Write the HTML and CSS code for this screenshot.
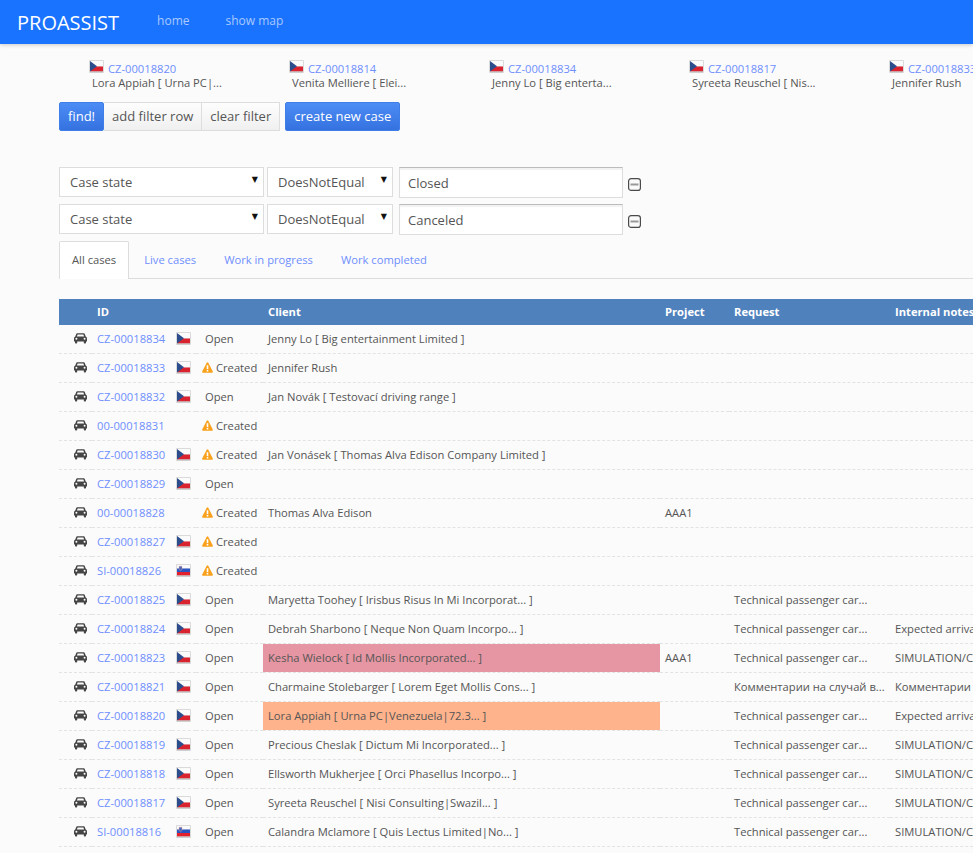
FILE: index.html
```html
<!DOCTYPE html>
<html lang="en">
<head>
    <meta charset="UTF-8">
    <meta name="viewport" content="width=device-width, initial-scale=1.0">
    <title>ProAssist</title>
    <link rel="stylesheet" href="styles.css">
</head>
<body>
    <svg class="defs" width="0" height="0">
        <symbol id="cz" viewBox="0 0 15 13">
            <rect width="15" height="13" rx="1" fill="#dadada"/>
            <rect x="1" y="1" width="13" height="5.500" fill="#fbfbfb"/>
            <rect x="1" y="6.500" width="13" height="5" fill="#d9232e"/>
            <path d="M1 1 L8 6.250 L1 11.500 Z" fill="#2b4d8c"/>
            <rect y="11.500" x="1" width="13" height="1" fill="#c4c4c4"/>
        </symbol>
        <symbol id="si" viewBox="0 0 15 13">
            <rect width="15" height="13" rx="1" fill="#dadada"/>
            <rect x="1" y="1" width="13" height="3.500" fill="#fbfbfb"/>
            <rect x="1" y="4.500" width="13" height="3.500" fill="#2a55c0"/>
            <rect x="1" y="8" width="13" height="3.500" fill="#e4202c"/>
            <path d="M3 2.200 h3 v2.800 q0 1.200 -1.500 1.800 q-1.500 -0.600 -1.500 -1.800 Z" fill="#4a68b8" stroke="#f0a0a0" stroke-width="0.400"/>
            <rect y="11.500" x="1" width="13" height="1" fill="#c4c4c4"/>
        </symbol>
        <symbol id="car" viewBox="0 0 13 11">
            <path fill-rule="evenodd" d="M3.200 0.300 H9.800 Q10.500 0.300 10.800 1 L11.700 3.600 Q13 4.100 13 5.400 V8.400 H12 V9.800 Q12 10.500 11.300 10.500 H10.500 Q9.800 10.500 9.800 9.800 V8.400 H3.200 V9.800 Q3.200 10.500 2.500 10.500 H1.700 Q1 10.500 1 9.800 V8.400 H0 V5.400 Q0 4.100 1.300 3.600 L2.200 1 Q2.500 0.300 3.200 0.300 Z M3.600 1.500 L2.900 3.500 H10.100 L9.400 1.500 Z M2.400 4.700 A1 1 0 1 0 2.401 6.700 A1 1 0 1 0 2.400 4.700 Z M10.600 4.700 A1 1 0 1 0 10.601 6.700 A1 1 0 1 0 10.600 4.700 Z" fill="#454545"/>
        </symbol>
        <symbol id="warn" viewBox="0 0 11 11">
            <path d="M5.500 0.200 Q6 0.200 6.300 0.800 L10.800 9.400 Q11.200 10.600 10 10.700 H1 Q-0.200 10.600 0.200 9.400 L4.700 0.800 Q5 0.200 5.500 0.200 Z" fill="#f9a11b"/>
            <rect x="4.700" y="3.200" width="1.600" height="4" fill="#fff"/>
            <rect x="4.700" y="8" width="1.600" height="1.500" fill="#fff"/>
        </symbol>
        <symbol id="minus" viewBox="0 0 13 13">
            <rect x="0.600" y="0.600" width="11.800" height="11.800" rx="2.500" fill="#fafafa" stroke="#4a4a4a" stroke-width="1.200"/>
            <rect x="2.500" y="5.500" width="8" height="2" fill="#999"/>
        </symbol>
    </svg>

    <nav class="topbar">
        <a class="brand" href="#">PROASSIST</a>
        <a class="nav-link" href="#">home</a>
        <a class="nav-link" href="#">show map</a>
    </nav>

    <div class="recent">
        <div class="recent-item">
            <div class="recent-id"><svg class="flag"><use href="#cz"/></svg><a href="#">CZ-00018820</a></div>
            <div class="recent-name">Lora Appiah [ Urna PC|...</div>
        </div>
        <div class="recent-item">
            <div class="recent-id"><svg class="flag"><use href="#cz"/></svg><a href="#">CZ-00018814</a></div>
            <div class="recent-name">Venita Melliere [ Elei...</div>
        </div>
        <div class="recent-item">
            <div class="recent-id"><svg class="flag"><use href="#cz"/></svg><a href="#">CZ-00018834</a></div>
            <div class="recent-name">Jenny Lo [ Big enterta...</div>
        </div>
        <div class="recent-item">
            <div class="recent-id"><svg class="flag"><use href="#cz"/></svg><a href="#">CZ-00018817</a></div>
            <div class="recent-name">Syreeta Reuschel [ Nis...</div>
        </div>
        <div class="recent-item">
            <div class="recent-id"><svg class="flag"><use href="#cz"/></svg><a href="#">CZ-00018833</a></div>
            <div class="recent-name">Jennifer Rush</div>
        </div>
    </div>

    <div class="toolbar">
        <div class="btn-group">
            <button class="btn btn-blue">find!</button>
            <button class="btn">add filter row</button>
            <button class="btn">clear filter</button>
        </div>
        <button class="btn btn-blue">create new case</button>
    </div>

    <div class="filters">
        <div class="filter-row">
            <div class="select-wrap field-wide"><select><option>Case state</option></select></div>
            <div class="select-wrap field-op"><select><option>DoesNotEqual</option></select></div>
            <input class="filter-value" type="text" value="Closed">
            <svg class="minus"><use href="#minus"/></svg>
        </div>
        <div class="filter-row">
            <div class="select-wrap field-wide"><select><option>Case state</option></select></div>
            <div class="select-wrap field-op"><select><option>DoesNotEqual</option></select></div>
            <input class="filter-value" type="text" value="Canceled">
            <svg class="minus"><use href="#minus"/></svg>
        </div>
    </div>

    <ul class="tabs">
        <li class="tab active"><a href="#">All cases</a></li>
        <li class="tab"><a href="#">Live cases</a></li>
        <li class="tab"><a href="#">Work in progress</a></li>
        <li class="tab"><a href="#">Work completed</a></li>
    </ul>

    <table class="cases">
        <colgroup>
            <col class="c-car"><col class="c-id"><col class="c-flag"><col class="c-state">
            <col class="c-client"><col class="c-project"><col class="c-request"><col class="c-notes">
        </colgroup>
        <thead>
            <tr><th></th><th>ID</th><th></th><th></th><th>Client</th><th>Project</th><th>Request</th><th>Internal notes</th></tr>
        </thead>
        <tbody>
            <tr><td><svg class="car"><use href="#car"/></svg></td><td><a href="#">CZ-00018834</a></td><td><svg class="flag"><use href="#cz"/></svg></td><td><span class="open">Open</span></td><td>Jenny Lo [ Big entertainment Limited ]</td><td></td><td></td><td></td></tr>
            <tr><td><svg class="car"><use href="#car"/></svg></td><td><a href="#">CZ-00018833</a></td><td><svg class="flag"><use href="#cz"/></svg></td><td><svg class="warn"><use href="#warn"/></svg>Created</td><td>Jennifer Rush</td><td></td><td></td><td></td></tr>
            <tr><td><svg class="car"><use href="#car"/></svg></td><td><a href="#">CZ-00018832</a></td><td><svg class="flag"><use href="#cz"/></svg></td><td><span class="open">Open</span></td><td>Jan Novák [ Testovací driving range ]</td><td></td><td></td><td></td></tr>
            <tr><td><svg class="car"><use href="#car"/></svg></td><td><a href="#">00-00018831</a></td><td></td><td><svg class="warn"><use href="#warn"/></svg>Created</td><td></td><td></td><td></td><td></td></tr>
            <tr><td><svg class="car"><use href="#car"/></svg></td><td><a href="#">CZ-00018830</a></td><td><svg class="flag"><use href="#cz"/></svg></td><td><svg class="warn"><use href="#warn"/></svg>Created</td><td>Jan Vonásek [ Thomas Alva Edison Company Limited ]</td><td></td><td></td><td></td></tr>
            <tr><td><svg class="car"><use href="#car"/></svg></td><td><a href="#">CZ-00018829</a></td><td><svg class="flag"><use href="#cz"/></svg></td><td><span class="open">Open</span></td><td></td><td></td><td></td><td></td></tr>
            <tr><td><svg class="car"><use href="#car"/></svg></td><td><a href="#">00-00018828</a></td><td></td><td><svg class="warn"><use href="#warn"/></svg>Created</td><td>Thomas Alva Edison</td><td>AAA1</td><td></td><td></td></tr>
            <tr><td><svg class="car"><use href="#car"/></svg></td><td><a href="#">CZ-00018827</a></td><td><svg class="flag"><use href="#cz"/></svg></td><td><svg class="warn"><use href="#warn"/></svg>Created</td><td></td><td></td><td></td><td></td></tr>
            <tr><td><svg class="car"><use href="#car"/></svg></td><td><a href="#">SI-00018826</a></td><td><svg class="flag"><use href="#si"/></svg></td><td><svg class="warn"><use href="#warn"/></svg>Created</td><td></td><td></td><td></td><td></td></tr>
            <tr><td><svg class="car"><use href="#car"/></svg></td><td><a href="#">CZ-00018825</a></td><td><svg class="flag"><use href="#cz"/></svg></td><td><span class="open">Open</span></td><td>Maryetta Toohey [ Irisbus Risus In Mi Incorporat... ]</td><td></td><td>Technical passenger car...</td><td></td></tr>
            <tr><td><svg class="car"><use href="#car"/></svg></td><td><a href="#">CZ-00018824</a></td><td><svg class="flag"><use href="#cz"/></svg></td><td><span class="open">Open</span></td><td>Debrah Sharbono [ Neque Non Quam Incorpo... ]</td><td></td><td>Technical passenger car...</td><td>Expected arrival time</td></tr>
            <tr><td><svg class="car"><use href="#car"/></svg></td><td><a href="#">CZ-00018823</a></td><td><svg class="flag"><use href="#cz"/></svg></td><td><span class="open">Open</span></td><td class="hl-red">Kesha Wielock [ Id Mollis Incorporated... ]</td><td>AAA1</td><td>Technical passenger car...</td><td>SIMULATION/CASE</td></tr>
            <tr><td><svg class="car"><use href="#car"/></svg></td><td><a href="#">CZ-00018821</a></td><td><svg class="flag"><use href="#cz"/></svg></td><td><span class="open">Open</span></td><td>Charmaine Stolebarger [ Lorem Eget Mollis Cons... ]</td><td></td><td>Комментарии на случай в...</td><td>Комментарии на случай</td></tr>
            <tr><td><svg class="car"><use href="#car"/></svg></td><td><a href="#">CZ-00018820</a></td><td><svg class="flag"><use href="#cz"/></svg></td><td><span class="open">Open</span></td><td class="hl-orange">Lora Appiah [ Urna PC|Venezuela|72.3... ]</td><td></td><td>Technical passenger car...</td><td>Expected arrival time</td></tr>
            <tr><td><svg class="car"><use href="#car"/></svg></td><td><a href="#">CZ-00018819</a></td><td><svg class="flag"><use href="#cz"/></svg></td><td><span class="open">Open</span></td><td>Precious Cheslak [ Dictum Mi Incorporated... ]</td><td></td><td>Technical passenger car...</td><td>SIMULATION/CASE</td></tr>
            <tr><td><svg class="car"><use href="#car"/></svg></td><td><a href="#">CZ-00018818</a></td><td><svg class="flag"><use href="#cz"/></svg></td><td><span class="open">Open</span></td><td>Ellsworth Mukherjee [ Orci Phasellus Incorpo... ]</td><td></td><td>Technical passenger car...</td><td>SIMULATION/CASE</td></tr>
            <tr><td><svg class="car"><use href="#car"/></svg></td><td><a href="#">CZ-00018817</a></td><td><svg class="flag"><use href="#cz"/></svg></td><td><span class="open">Open</span></td><td>Syreeta Reuschel [ Nisi Consulting|Swazil... ]</td><td></td><td>Technical passenger car...</td><td>SIMULATION/CASE</td></tr>
            <tr><td><svg class="car"><use href="#car"/></svg></td><td><a href="#">SI-00018816</a></td><td><svg class="flag"><use href="#si"/></svg></td><td><span class="open">Open</span></td><td>Calandra Mclamore [ Quis Lectus Limited|No... ]</td><td></td><td>Technical passenger car...</td><td>SIMULATION/CASE</td></tr>
        </tbody>
    </table>
</body>
</html>
```

FILE: styles.css
```css
html, body {
    margin: 0;
    height: 853px;
    overflow: hidden;
}
body {
    background: #fbfbfb;
    color: #555;
    font-family: "Open Sans", sans-serif;
    font-size: 11.2px;
}
a {
    color: #6f8fff;
    text-decoration: none;
}
.defs {
    display: block;
    height: 0;
}

.topbar {
    display: flex;
    align-items: center;
    height: 44px;
    padding-left: 17px;
    background: #1a73ff;
    box-shadow: 0 1px 4px rgba(0, 0, 0, 0.2);
}
.brand {
    color: #fff;
    font-size: 20px;
    margin-right: 38px;
}
.nav-link {
    color: #a9c9ff;
    font-size: 12px;
    margin: -3px 36px 0 0;
}

.recent {
    display: flex;
    width: 1200px;
    margin: 17px 0 0 89px;
}
.recent-item {
    width: 200px;
    flex: none;
}
.recent-id {
    display: flex;
    align-items: center;
    height: 14px;
}
.recent-id .flag {
    margin: -4px 4px 0 0;
}
.recent-name {
    margin-left: 3px;
    line-height: 15px;
}

.flag {
    display: block;
    width: 15px;
    height: 13px;
}

.toolbar {
    display: flex;
    margin: 12px 0 0 59px;
}
.btn-group {
    display: flex;
    margin-right: 5px;
}
.btn {
    height: 29px;
    padding: 0 8px 2px;
    border: 1px solid #ddd;
    border-left-width: 0;
    background: linear-gradient(#fdfdfd, #f0f0f0);
    color: #555;
    font-family: inherit;
    font-size: 13px;
}
.btn-blue {
    border: 1px solid #3d7ee8;
    border-radius: 2px;
    background: linear-gradient(#4c8cf5, #3572e0);
    color: #fff;
}

.filters {
    margin: 36px 0 0 59px;
}
.filter-row {
    display: flex;
    align-items: flex-start;
    margin-bottom: 6px;
}
.select-wrap {
    position: relative;
    margin-right: 3px;
}
.select-wrap::after {
    content: "▼";
    position: absolute;
    top: 8px;
    right: 6px;
    color: #111;
    font-family: "DejaVu Sans", sans-serif;
    font-size: 8px;
}
.select-wrap select {
    appearance: none;
    display: block;
    width: 100%;
    height: 30px;
    padding: 0 0 0 10px;
    border: 1px solid #ddd;
    border-radius: 0;
    background: #fff;
    color: #555;
    font-family: inherit;
    font-size: 13px;
}
.field-wide {
    width: 205px;
}
.field-op {
    width: 126px;
}
.filter-value {
    box-sizing: border-box;
    width: 224px;
    height: 31px;
    margin-left: 3px;
    padding: 1px 8px 0;
    border: 1px solid #ddd;
    border-top-color: #bbb;
    box-shadow: inset 0 2px 1px #f2f2f2;
    background: #fff;
    color: #555;
    font-family: inherit;
    font-size: 13px;
}
.minus {
    width: 13px;
    height: 13px;
    margin: 11px 0 0 5px;
}

.tabs {
    display: flex;
    margin: 0 0 0 59px;
    padding: 0;
    list-style: none;
    border-bottom: 1px solid #ddd;
}
.tab {
    height: 37px;
    margin-bottom: -1px;
    padding: 0 13px;
    line-height: 35px;
    border: 1px solid transparent;
    border-bottom: 0;
}
.tab.active {
    padding: 0 12px;
    margin-right: 1px;
    border-color: #ddd;
    border-radius: 2px 2px 0 0;
    background: #fff;
}
.tab.active a {
    color: #555;
}

.cases {
    table-layout: fixed;
    border-collapse: collapse;
    width: 1300px;
    margin: 20px 0 0 59px;
}
.c-car { width: 33px; }
.c-id { width: 80px; }
.c-flag { width: 24px; }
.c-state { width: 67px; }
.c-client { width: 397px; }
.c-project { width: 69px; }
.c-request { width: 161px; }
.cases th {
    height: 24px;
    padding: 0 5px 2px;
    background: #4f81bd;
    color: #fff;
    font-weight: 700;
    text-align: left;
    white-space: nowrap;
}
.cases td {
    height: 26px;
    padding: 0 5px 2px;
    border-bottom: 1px dashed #e3e3e3;
    white-space: nowrap;
    overflow: hidden;
}
.cases td:first-child {
    padding-left: 15px;
}
.cases td:nth-child(3) {
    padding-left: 4px;
}
.car {
    display: block;
    width: 13px;
    height: 11px;
}
.warn {
    width: 11px;
    height: 11px;
    margin: 0 3px 0 1px;
    vertical-align: -1px;
}
.open {
    margin-left: 4px;
}
.hl-red {
    background: #e696a3;
}
.hl-orange {
    background: #ffb38c;
}
```
